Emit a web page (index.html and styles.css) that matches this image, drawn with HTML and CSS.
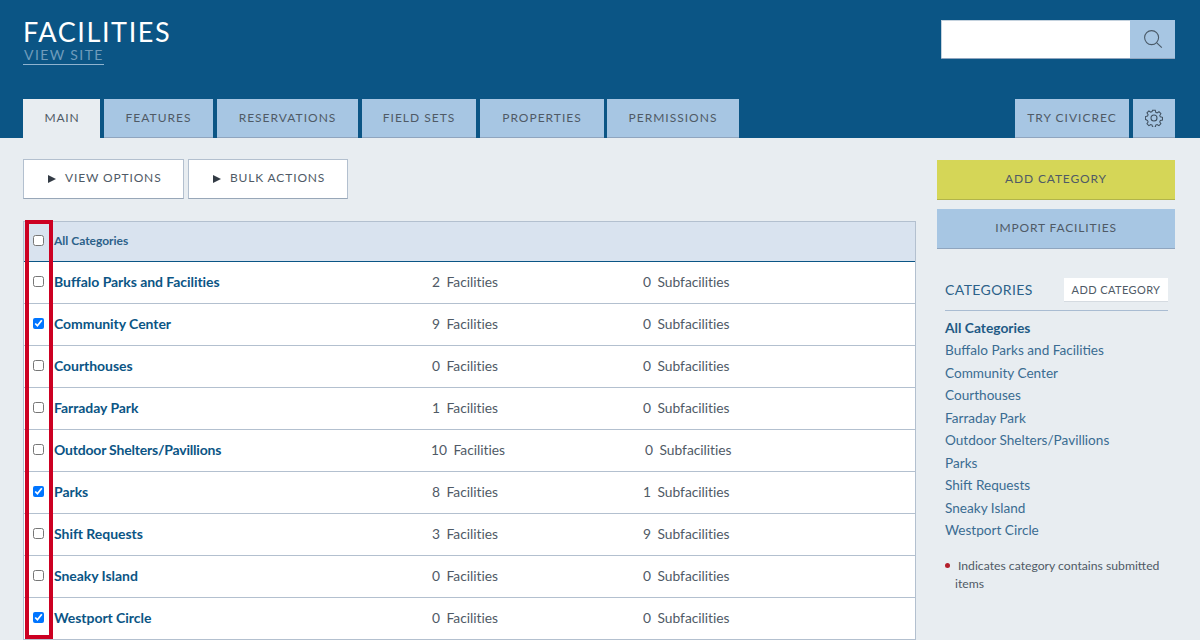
FILE: index.html
```html
<!DOCTYPE html>
<html lang="en">
<head>
<meta charset="utf-8">
<title>Facilities</title>
<link rel="stylesheet" href="styles.css">
</head>
<body>
<header class="header">
  <div class="header-top">
    <div class="brand">
      <h1 class="title">FACILITIES</h1>
      <a class="view-site">VIEW SITE</a>
    </div>
    <div class="search">
      <input class="search-input" type="text" aria-label="Search">
      <button class="search-btn" aria-label="Search">
        <svg width="20" height="20" viewBox="0 0 20 20" fill="none" stroke="#4a5a68" stroke-width="1.1"><circle cx="8.6" cy="8.6" r="7"/><path d="M13.8 13.8l5 4.8"/></svg>
      </button>
    </div>
  </div>
  <nav class="tabs">
    <a class="tab tab-active tab-main">MAIN</a>
    <a class="tab tab-features">FEATURES</a>
    <a class="tab tab-res">RESERVATIONS</a>
    <a class="tab tab-fields">FIELD SETS</a>
    <a class="tab tab-props">PROPERTIES</a>
    <a class="tab tab-perms">PERMISSIONS</a>
    <a class="tab tab-try">TRY CIVICREC</a>
    <a class="tab tab-gear" aria-label="Settings">
      <svg width="18" height="18" viewBox="0 0 18 18" fill="none" stroke="#3f4f5e" stroke-width="1.05"><circle cx="9" cy="9" r="3"/><path d="M7.6 1h2.800l.5 2.200 1.400.6 1.900-1.200 2 2-1.200 1.900.6 1.400 2.200.5v2.800l-2.200.5-.6 1.400 1.200 1.900-2 2-1.900-1.200-1.400.6-.5 2.200H7.600l-.5-2.200-1.400-.6-1.900 1.200-2-2 1.200-1.900-.6-1.400L.2 10.400V7.600l2.200-.5.6-1.400L1.800 3.800l2-2 1.900 1.200 1.400-.6z" transform="translate(.2 .2) scale(.97)"/></svg>
    </a>
  </nav>
</header>
<div class="page">
  <main class="content">
    <div class="actions">
      <button class="action action-view"><span class="arrow"></span>VIEW OPTIONS</button>
      <button class="action action-bulk"><span class="arrow"></span>BULK ACTIONS</button>
    </div>
    <div class="table-wrap">
      <div class="mark"></div>
      <div class="table">
        <div class="row row-head"><input type="checkbox"><span class="head-name">All Categories</span></div>
        <div class="row"><input type="checkbox"><span class="name">Buffalo Parks and Facilities</span><span class="count">2<em>Facilities</em></span><span class="count">0<em>Subfacilities</em></span></div>
        <div class="row"><input type="checkbox" checked><span class="name">Community Center</span><span class="count">9<em>Facilities</em></span><span class="count">0<em>Subfacilities</em></span></div>
        <div class="row"><input type="checkbox"><span class="name">Courthouses</span><span class="count">0<em>Facilities</em></span><span class="count">0<em>Subfacilities</em></span></div>
        <div class="row"><input type="checkbox"><span class="name">Farraday Park</span><span class="count">1<em>Facilities</em></span><span class="count">0<em>Subfacilities</em></span></div>
        <div class="row row-wide"><input type="checkbox"><span class="name">Outdoor Shelters/Pavillions</span><span class="count">10<em>Facilities</em></span><span class="count">0<em>Subfacilities</em></span></div>
        <div class="row"><input type="checkbox" checked><span class="name">Parks</span><span class="count">8<em>Facilities</em></span><span class="count">1<em>Subfacilities</em></span></div>
        <div class="row"><input type="checkbox"><span class="name">Shift Requests</span><span class="count">3<em>Facilities</em></span><span class="count">9<em>Subfacilities</em></span></div>
        <div class="row"><input type="checkbox"><span class="name">Sneaky Island</span><span class="count">0<em>Facilities</em></span><span class="count">0<em>Subfacilities</em></span></div>
        <div class="row"><input type="checkbox" checked><span class="name">Westport Circle</span><span class="count">0<em>Facilities</em></span><span class="count">0<em>Subfacilities</em></span></div>
      </div>
    </div>
  </main>
  <aside class="sidebar">
    <button class="side-btn side-add">ADD CATEGORY</button>
    <button class="side-btn side-import">IMPORT FACILITIES</button>
    <div class="panel">
      <div class="panel-head">
        <span class="panel-title">CATEGORIES</span>
        <button class="panel-add">ADD CATEGORY</button>
      </div>
      <ul class="cats">
        <li class="cat-current">All Categories</li>
        <li>Buffalo Parks and Facilities</li>
        <li>Community Center</li>
        <li>Courthouses</li>
        <li>Farraday Park</li>
        <li>Outdoor Shelters/Pavillions</li>
        <li>Parks</li>
        <li>Shift Requests</li>
        <li>Sneaky Island</li>
        <li>Westport Circle</li>
      </ul>
      <p class="note"><span class="dot"></span>Indicates category contains submitted items</p>
    </div>
  </aside>
</div>
</body>
</html>
```
FILE: styles.css
```css
* { box-sizing: border-box; }
html, body { margin: 0; height: 640px; overflow: hidden; }
body { background: #e8edf1; font-family: "Lato", "Open Sans", sans-serif; color: #0b5585; }
button { font-family: inherit; cursor: pointer; }

.header { height: 138px; background: #0b5585; padding: 0 25px 0 23px; display: flex; flex-direction: column; justify-content: space-between; }
.header-top { display: flex; justify-content: space-between; align-items: flex-start; padding-top: 20px; }
.title { margin: 0; font-size: 27px; font-weight: 400; line-height: 24px; letter-spacing: 1.6px; color: #fff; }
.view-site { display: block; margin-top: 2px; font-size: 14px; font-weight: 400; line-height: 17px; letter-spacing: 1.4px; color: #6f9cbc; border-bottom: 1px solid #8fb3cf; padding-bottom: 1px; padding-left: 1px; width: 81px; white-space: nowrap; }
.search { display: flex; width: 234px; height: 39px; border-bottom: 1px solid #8fa5bf; }
.search-input { width: 189px; height: 38px; border: 0; border-left: 1px solid #c4d2de; border-top: 1px solid #c4d2de; background: #fff; padding: 0; }
.search-btn { width: 45px; height: 38px; border: 0; padding: 0; background: #a7c6e3; display: flex; align-items: center; justify-content: center; }

.tabs { display: flex; height: 39px; gap: 4px; }
.tab { display: flex; align-items: center; justify-content: center; padding-bottom: 2px; background: #a7c6e3; border-bottom: 1px solid #8fa5bf; color: #4f5a66; font-size: 12px; letter-spacing: 1px; white-space: nowrap; }
.tab-active { background: #e8edf1; border-bottom: 0; }
.tab-main { width: 77px; letter-spacing: .8px; padding-left: 1px; }
.tab-features { width: 109px; }
.tab-res { width: 141px; }
.tab-fields { width: 114px; }
.tab-props { width: 124px; }
.tab-perms { width: 132px; margin-left: -1px; }
.tab-try { width: 114px; margin-left: auto; }
.tab-gear { width: 42px; padding-bottom: 0; }

.page { display: flex; padding: 0 25px 0 23px; gap: 21px; }
.content { width: 893px; }
.actions { display: flex; gap: 4px; padding-top: 21px; }
.action { height: 40px; background: #fff; border: 1px solid #b3c0cf; border-bottom-color: #98a7b8; color: #4f5a66; font-size: 12px; letter-spacing: .85px; display: flex; align-items: center; padding: 0 0 3px 24px; }
.action-view { width: 161px; }
.action-bulk { width: 160px; }
.arrow { width: 0; height: 0; margin-right: 9px; margin-top: 2px; border-left: 8px solid #333b45; border-top: 4px solid transparent; border-bottom: 4px solid transparent; }

.table-wrap { position: relative; margin-top: 22px; }
.mark { position: absolute; left: 2px; top: -1px; width: 28px; height: 419px; border: 4px solid #cc0022; z-index: 2; pointer-events: none; }
.table { background: #fff; border-left: 1px solid #b3c0cf; border-right: 1px solid #b3c0cf; }
.row { display: grid; grid-template-columns: 30px 378px 211px 1fr; align-items: center; height: 42px; padding-bottom: 2px; border-bottom: 1px solid #b3c0cf; font-size: 13.8px; color: #4f5a66; }
.row-wide { grid-template-columns: 30px 377px 214px 1fr; }
.row-head { height: 41px; display: flex; background: #d9e3ef; border-top: 1px solid #b3c0cf; border-bottom-color: #0b5585; }
.row input { margin: 0 0 0 9px; width: 11px; height: 11px; }
.row-head input { margin-right: 10px; }
.head-name { font-size: 12px; font-weight: 700; color: #2c6189; }
.name { font-weight: 700; font-size: 14px; color: #0b5585; white-space: nowrap; letter-spacing: -.05px; }
.row-wide .name { letter-spacing: -.2px; }
.count { white-space: nowrap; }
.count em { font-style: normal; margin-left: 6.5px; letter-spacing: -.02px; }

.sidebar { width: 238px; padding-top: 22px; }
.side-btn { display: block; width: 100%; height: 40px; border: 0; border-bottom: 1px solid #b2b44a; padding: 0 0 3px; color: #4f5a66; font-size: 12px; letter-spacing: .85px; }
.side-add { background: #d5d657; }
.side-import { margin-top: 9px; background: #a7c6e3; border-bottom-color: #8fa5bf; }
.panel { margin: 29px 7px 0 8px; }
.panel-head { display: flex; justify-content: space-between; align-items: center; height: 33px; padding-bottom: 8px; border-bottom: 1px solid #a9bcd2; }
.panel-title { font-size: 14px; letter-spacing: .4px; line-height: 14px; color: #2c6189; }
.panel-add { width: 104px; height: 24px; border: 0; border-bottom: 1px solid #d5dbe1; background: #fff; color: #4f5a66; font-size: 11px; letter-spacing: .4px; padding: 0; }
.cats { list-style: none; margin: 6px 0 0; padding: 0; font-size: 13.6px; color: #3a6c92; }
.cats li { height: 22.45px; line-height: 22.45px; white-space: nowrap; }
.cats .cat-current { font-weight: 700; font-size: 13.8px; color: #1f5a85; }
.note { margin: 16px 0 0; padding: 0 0 0 10px; font-size: 12.2px; line-height: 18px; color: #4f5a66; }
.dot { display: inline-block; width: 5px; height: 5px; margin: 0 8px 2px -10px; border-radius: 50%; background: #b3202c; }
```
